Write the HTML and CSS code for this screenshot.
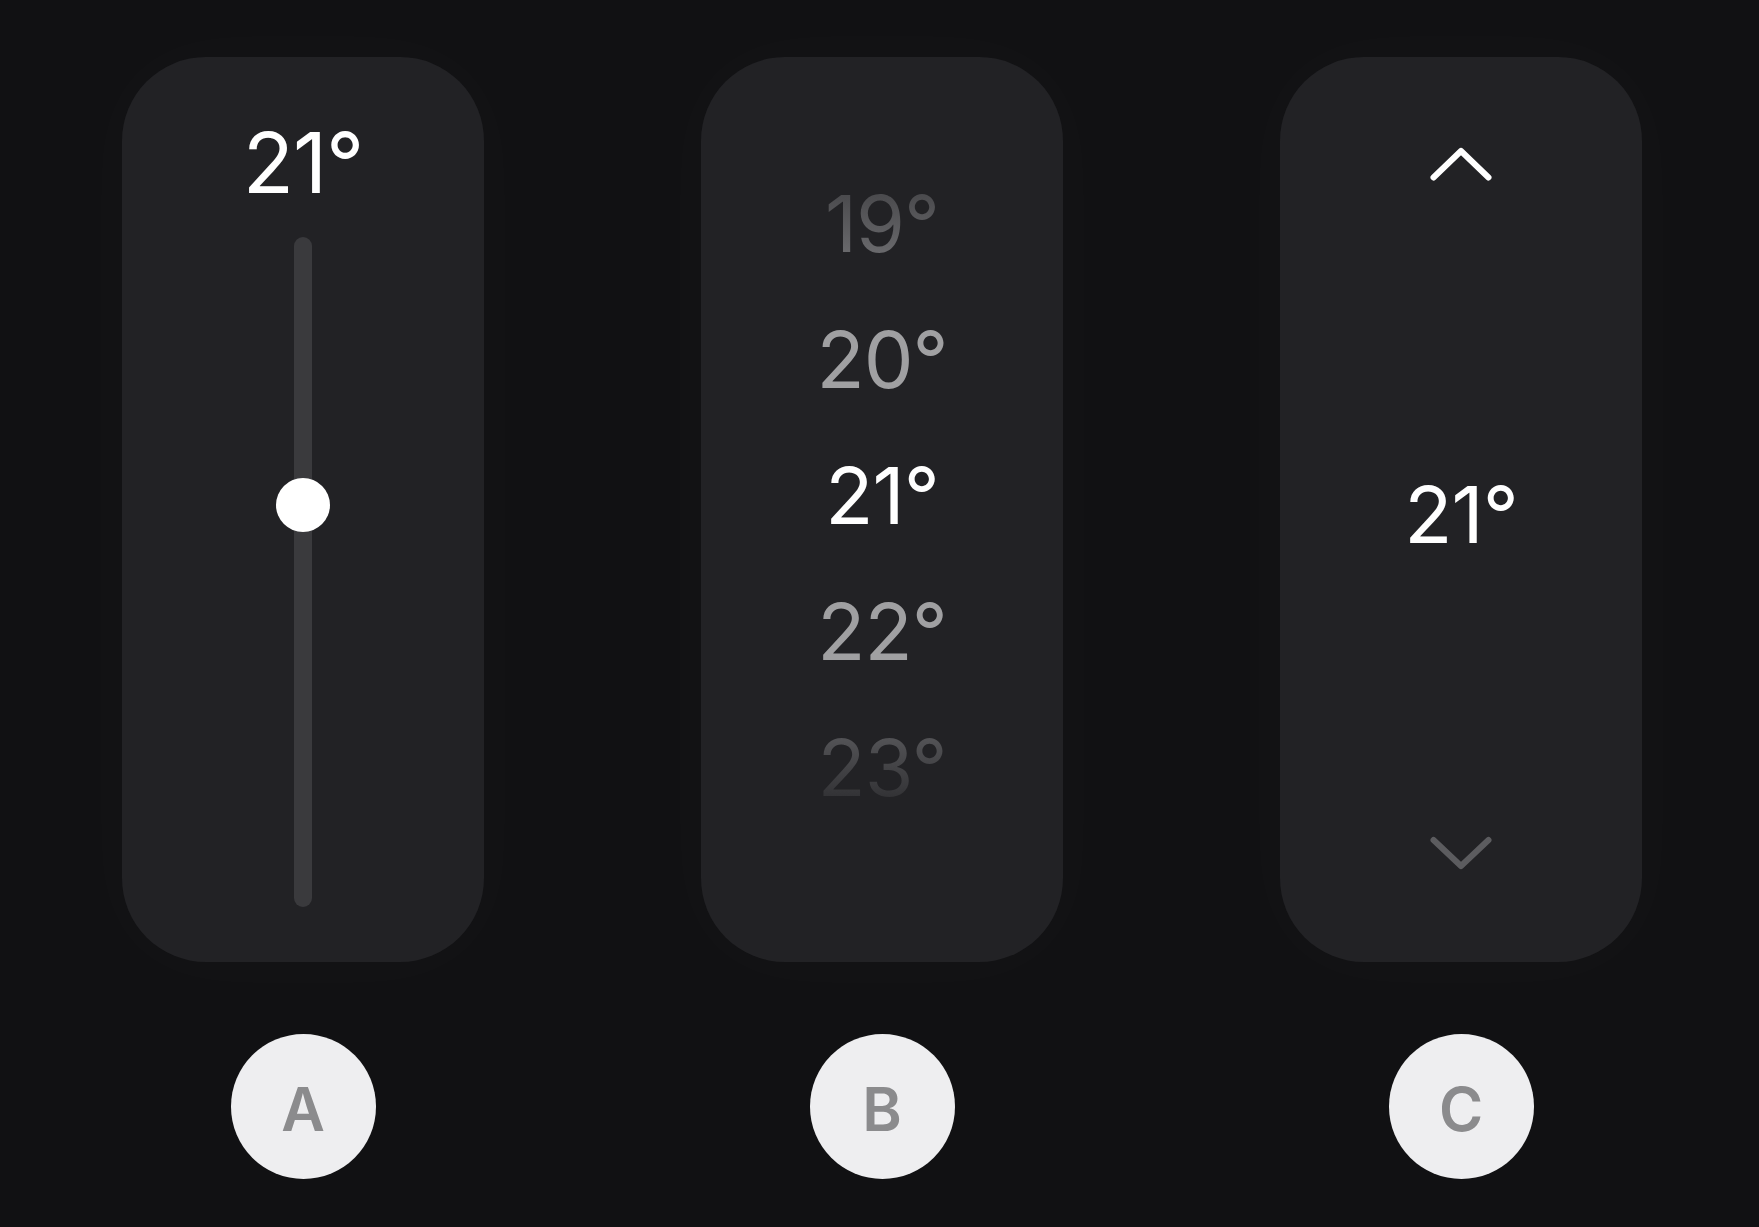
FILE: index.html
```html
<!DOCTYPE html>
<html lang="en">
<head>
<meta charset="utf-8">
<title>Temperature pickers</title>
<link rel="stylesheet" href="styles.css">
</head>
<body>
<main class="stage">
  <section class="column">
    <div class="card card-slider">
      <div class="slider-value">21°</div>
      <div class="track">
        <div class="knob" style="top: 40%"></div>
      </div>
    </div>
    <div class="label">A</div>
  </section>

  <section class="column">
    <div class="card card-wheel">
      <div class="wheel-item far-top">19°</div>
      <div class="wheel-item near">20°</div>
      <div class="wheel-item current">21°</div>
      <div class="wheel-item near">22°</div>
      <div class="wheel-item far-bottom">23°</div>
    </div>
    <div class="label">B</div>
  </section>

  <section class="column">
    <div class="card card-stepper">
      <svg class="chevron chevron-up" width="64" height="38" viewBox="0 0 64 38" aria-hidden="true">
        <path d="M4.5 32.5 L32 6 L59.5 32.5" />
      </svg>
      <div class="stepper-value">21°</div>
      <svg class="chevron chevron-down" width="64" height="38" viewBox="0 0 64 38" aria-hidden="true">
        <path d="M4.5 6 L32 32 L59.5 6" />
      </svg>
    </div>
    <div class="label">C</div>
  </section>
</main>
</body>
</html>
```
FILE: styles.css
```css
* { box-sizing: border-box; }

html, body {
  margin: 0;
  padding: 0;
  background: #111113;
}

body {
  width: 1759px;
  height: 1227px;
  overflow: hidden;
  font-family: Inter, "Liberation Sans", sans-serif;
  color: #ffffff;
}

.stage {
  display: flex;
  justify-content: flex-start;
  gap: 217px;
  padding: 57px 0 0 122px;
}

.column {
  display: flex;
  flex-direction: column;
  align-items: center;
  width: 362px;
}

.card {
  width: 362px;
  height: 905px;
  border-radius: 84px;
  background: #222225;
  box-shadow: 0 0 90px 40px rgba(255, 255, 255, 0.012);
}

/* A: slider */
.card-slider {
  display: flex;
  flex-direction: column;
  align-items: center;
  padding: 64px 0 55px;
}

.slider-value {
  font-size: 84px;
  line-height: 84px;
  font-weight: 400;
  letter-spacing: -1px;
  color: #ffffff;
}

.track {
  position: relative;
  width: 18px;
  flex: 1;
  margin-top: 32px;
  border-radius: 9px;
  background: #3a3a3d;
}

.knob {
  position: absolute;
  left: 50%;
  width: 54px;
  height: 54px;
  margin-left: -27px;
  margin-top: -27px;
  border-radius: 50%;
  background: #ffffff;
}

/* B: wheel */
.card-wheel {
  display: flex;
  flex-direction: column;
  align-items: center;
  padding-top: 98px;
}

.wheel-item {
  font-size: 79px;
  line-height: 136px;
  font-weight: 400;
  letter-spacing: -1px;
}

.wheel-item.current { color: #ffffff; }
.wheel-item.near { color: #a0a0a2; }

.wheel-item.far-top {
  background: linear-gradient(to bottom, #4b4b4e 30%, #69696c 72%);
  -webkit-background-clip: text;
  background-clip: text;
  color: transparent;
}

.wheel-item.far-bottom {
  background: linear-gradient(to bottom, #525255 30%, #333336 72%);
  -webkit-background-clip: text;
  background-clip: text;
  color: transparent;
}

/* C: stepper */
.card-stepper {
  display: flex;
  flex-direction: column;
  align-items: center;
  justify-content: space-between;
  padding: 88px 0 90px;
}

.chevron path {
  fill: none;
  stroke-width: 6;
  stroke-linecap: round;
  stroke-linejoin: round;
}

.chevron-up path { stroke: #ffffff; }
.chevron-down path { stroke: #5c5c5f; }

.stepper-value {
  font-size: 79px;
  line-height: 79px;
  font-weight: 400;
  letter-spacing: -1px;
  padding-top: 11px;
}

/* Labels */
.label {
  display: flex;
  align-items: center;
  justify-content: center;
  width: 145px;
  height: 145px;
  margin-top: 72px;
  padding-top: 5px;
  border-radius: 50%;
  background: #eeeef0;
  color: #8b8b8d;
  font-size: 60px;
  line-height: 60px;
  font-weight: 600;
}
```
